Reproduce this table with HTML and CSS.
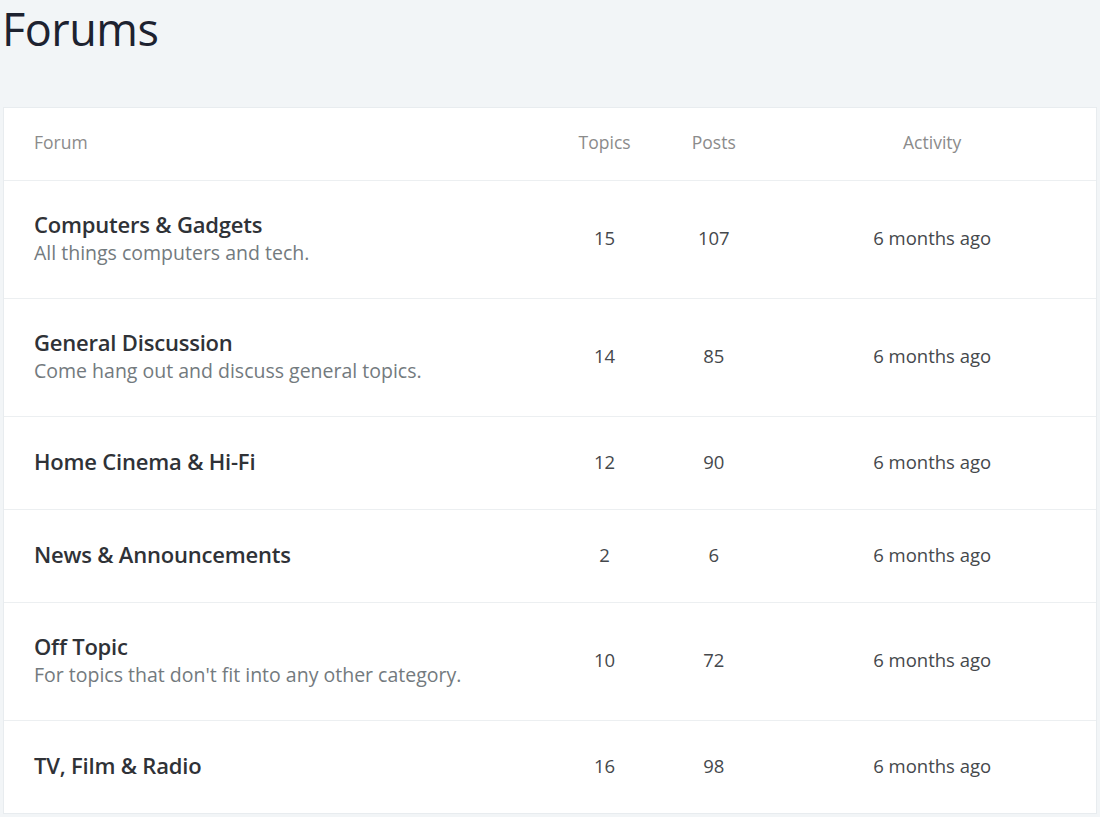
FILE: index.html
```html
<!DOCTYPE html>
<html lang="en">
<head>
<meta charset="utf-8">
<title>Forums</title>
<link rel="stylesheet" href="styles.css">
</head>
<body>
<main class="page">
  <h1 class="page-title">Forums</h1>
  <div class="card">
    <table class="forum-table">
      <colgroup>
        <col class="col-forum">
        <col class="col-num">
        <col class="col-num">
        <col class="col-activity">
      </colgroup>
      <thead>
        <tr>
          <th class="th-forum">Forum</th>
          <th>Topics</th>
          <th>Posts</th>
          <th>Activity</th>
        </tr>
      </thead>
      <tbody>
        <tr>
          <td class="td-forum"><div class="f-name">Computers &amp; Gadgets</div><div class="f-desc">All things computers and tech.</div></td>
          <td>15</td><td>107</td><td>6 months ago</td>
        </tr>
        <tr>
          <td class="td-forum"><div class="f-name">General Discussion</div><div class="f-desc">Come hang out and discuss general topics.</div></td>
          <td>14</td><td>85</td><td>6 months ago</td>
        </tr>
        <tr>
          <td class="td-forum"><div class="f-name">Home Cinema &amp; Hi-Fi</div></td>
          <td>12</td><td>90</td><td>6 months ago</td>
        </tr>
        <tr>
          <td class="td-forum"><div class="f-name">News &amp; Announcements</div></td>
          <td>2</td><td>6</td><td>6 months ago</td>
        </tr>
        <tr>
          <td class="td-forum"><div class="f-name">Off Topic</div><div class="f-desc">For topics that don't fit into any other category.</div></td>
          <td>10</td><td>72</td><td>6 months ago</td>
        </tr>
        <tr>
          <td class="td-forum"><div class="f-name">TV, Film &amp; Radio</div></td>
          <td>16</td><td>98</td><td>6 months ago</td>
        </tr>
      </tbody>
    </table>
  </div>
</main>
</body>
</html>
```

FILE: styles.css
```css
html, body {
  margin: 0;
  padding: 0;
  background: #f2f5f7;
  font-family: "Open Sans", "Noto Sans", sans-serif;
  color: #33363b;
}

.page {
  padding: 0 3px;
}

.page-title {
  margin: 0 0 49px -1px;
  font-size: 45px;
  line-height: 58px;
  font-weight: 400;
  color: #1d2230;
  letter-spacing: -0.5px;
}

.card {
  background: #ffffff;
  border: 1px solid #e8ecef;
}

.forum-table {
  width: 100%;
  border-collapse: collapse;
  table-layout: fixed;
}

.col-forum { width: 50%; }
.col-num { width: 10%; }
.col-activity { width: 30%; }

.forum-table th {
  font-weight: 400;
  font-size: 17.5px;
  line-height: 27px;
  color: #8b8b8b;
  text-align: center;
  padding: 21px 0 24px;
  border-bottom: 1px solid #eceff1;
}

.forum-table th.th-forum {
  text-align: left;
  padding-left: 30px;
}

.forum-table td {
  text-align: center;
  font-size: 18.5px;
  color: #45484c;
  padding: 28px 0 32px;
  border-bottom: 1px solid #eceff1;
  vertical-align: middle;
}

.forum-table tbody tr:last-child td {
  border-bottom: none;
}

.forum-table td.td-forum {
  text-align: left;
  padding-left: 30px;
}

.f-name {
  font-size: 22px;
  line-height: 30px;
  font-weight: 600;
  color: #2f3237;
  letter-spacing: -0.2px;
}

.f-name:only-child {
  line-height: 32px;
}

.f-desc {
  font-size: 19.5px;
  line-height: 27px;
  color: #737a7e;
}
```
